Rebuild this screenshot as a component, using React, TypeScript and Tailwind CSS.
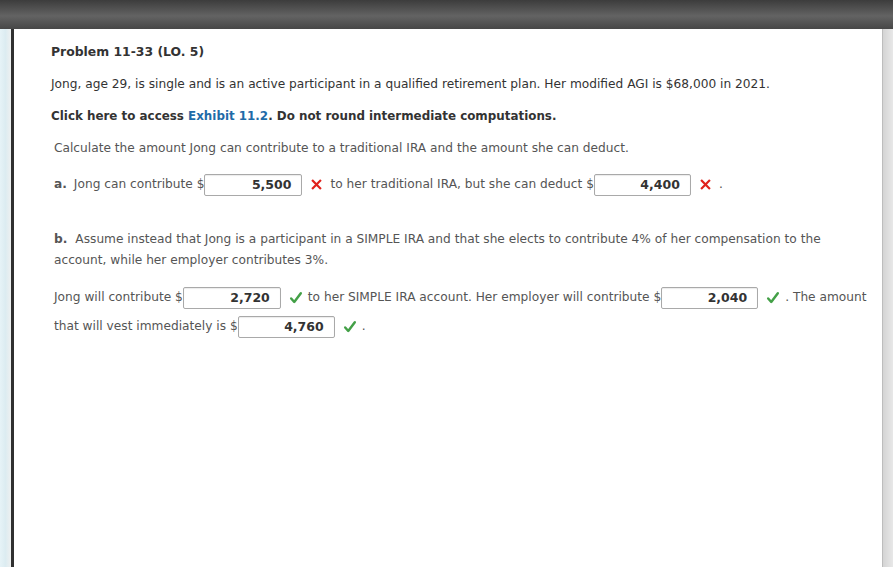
import React from "react";

const font = { fontFamily: '"DejaVu Sans", Verdana, sans-serif' };

function Box({ value, w = "w-[98px]" }: { value: string; w?: string }) {
  return (
    <span
      className={`inline-block ${w} h-[22px] align-middle border border-[#a9a9a9] rounded-[2px] bg-white text-right pr-[10px] font-bold text-[12.5px] text-[#333] leading-[20px] shadow-[inset_0_1px_1px_rgba(0,0,0,0.08)]`}
    >
      {value}
    </span>
  );
}

function Cross() {
  return (
    <svg viewBox="0 0 12 12" className="inline-block ml-[9px] mr-[8px] w-[11px] h-[11px] align-middle">
      <path d="M2 2 L10 10 M10 2 L2 10" fill="none" stroke="#e0211b" strokeWidth="2.4" strokeLinecap="square" />
    </svg>
  );
}

function Check() {
  return (
    <svg viewBox="0 0 16 16" className="inline-block ml-[8px] mr-[5px] w-[14px] h-[14px] align-middle">
      <path d="M2.5 8.5 L6 12.5 L13.5 2.5" fill="none" stroke="#43a047" strokeWidth="2.8" strokeLinecap="round" strokeLinejoin="round" />
    </svg>
  );
}

export default function App() {
  return (
    <div className="w-[893px] h-[567px] flex flex-col bg-white overflow-hidden text-[12.2px]" style={font}>
      <div className="h-[29px] shrink-0 bg-[linear-gradient(#3c3c3c,#5c5c5c_45%,#636363_55%,#474747)]" />
      <div className="flex flex-1">
        <div className="w-[11px] bg-[linear-gradient(90deg,#e6f3f7,#dcecf1_50%,#eef0f0)]" />
        <div className="w-[3px] bg-[#303030]" />
        <div className="flex-1 pl-[37px] pt-[13px] text-[#333]">
          <p className="font-bold text-[12.4px] h-[20px] leading-[20px]">Problem 11-33 (LO. 5)</p>
          <p className="mt-[12px] leading-[20px]">
            Jong, age 29, is single and is an active participant in a qualified retirement plan. Her modified AGI is $68,000 in 2021.
          </p>
          <p className="mt-[12px] leading-[20px] font-bold text-[11.9px]">
            Click here to access <span className="text-[#1f6ba8]">Exhibit 11.2</span>. Do not round intermediate computations.
          </p>
          <div className="pl-[3px] text-[#555]">
            <p className="mt-[12px] leading-[20px]">
              Calculate the amount Jong can contribute to a traditional IRA and the amount she can deduct.
            </p>
            <p className="mt-[14px] leading-[24px]">
              <span className="inline-block font-bold mr-[7px]">a.</span>Jong can contribute $<Box value="5,500" />
              <Cross />to her traditional IRA, but she can deduct $<Box value="4,400" w="w-[97px]" />
              <Cross />.
            </p>
            <p className="mt-[33px] leading-[21px] pr-[40px]">
              <span className="inline-block font-bold mr-[8px]">b.</span>Assume instead that Jong is a participant in a SIMPLE IRA and that she elects to contribute 4% of her compensation to the account, while her employer contributes 3%.
            </p>
            <p className="mt-[12px] leading-[29px] whitespace-nowrap">
              Jong will contribute $<Box value="2,720" />
              <Check />to her SIMPLE IRA account. Her employer will contribute $<Box value="2,040" w="w-[97px]" />
              <Check />. The amount
              <br />
              that will vest immediately is $<Box value="4,760" w="w-[97px]" />
              <Check />.
            </p>
          </div>
        </div>
        <div className="w-[11px] border-l border-[#bdbdbd] bg-[linear-gradient(90deg,#d4d4d4,#e8e8e8)]" />
      </div>
    </div>
  );
}
